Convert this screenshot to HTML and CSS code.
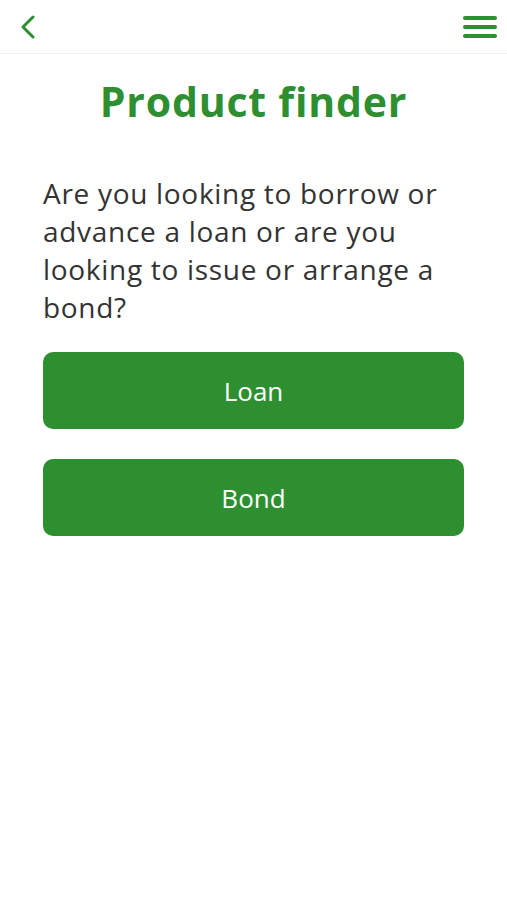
FILE: index.html
```html
<!DOCTYPE html>
<html lang="en">
<head>
  <meta charset="UTF-8">
  <meta name="viewport" content="width=device-width, initial-scale=1.0">
  <title>Product finder</title>
  <link rel="stylesheet" href="styles.css">
</head>
<body>
  <header class="top-bar">
    <button class="icon-btn back-btn" aria-label="Back">
      <svg width="16" height="24" viewBox="0 0 16 24">
        <path d="M13 2 L3 12 L13 22" fill="none" stroke="#2e8f31" stroke-width="3" stroke-linecap="round" stroke-linejoin="round"/>
      </svg>
    </button>
    <button class="icon-btn menu-btn" aria-label="Menu">
      <span></span><span></span><span></span>
    </button>
  </header>
  <main class="finder">
    <h1>Product finder</h1>
    <p class="question">Are you looking to borrow or advance a loan or are you looking to issue or arrange a bond?</p>
    <div class="choices">
      <button class="choice">Loan</button>
      <button class="choice">Bond</button>
    </div>
  </main>
</body>
</html>
```
FILE: styles.css
```css
* {
  margin: 0;
  padding: 0;
  box-sizing: border-box;
}

body {
  font-family: 'Open Sans', sans-serif;
  background: #FFF;
  color: #333;
}

.top-bar {
  height: 54px;
  display: flex;
  align-items: center;
  justify-content: space-between;
  padding: 0 10px 0 20px;
  border-bottom: 1px solid #f0f0f0;
}

.icon-btn {
  background: none;
  border: none;
  cursor: pointer;
  display: flex;
}

.menu-btn {
  flex-direction: column;
  gap: 5px;
  width: 34px;
}

.menu-btn span {
  display: block;
  height: 4px;
  border-radius: 2px;
  background: #2e8f31;
}

.finder {
  padding: 0 43px;
}

.finder h1 {
  font-size: 41px;
  font-weight: 700;
  color: #2e8f31;
  text-align: center;
  margin-top: 22px;
  line-height: 50px;
  letter-spacing: 0.8px;
}

.question {
  font-size: 28px;
  line-height: 38px;
  letter-spacing: 0.7px;
  color: #333;
  margin-top: 48px;
}

.choices {
  display: flex;
  flex-direction: column;
  gap: 30px;
  margin-top: 26px;
}

.choice {
  height: 77px;
  border: none;
  border-radius: 10px;
  background: #2e8f31;
  color: #FFF;
  font-family: inherit;
  font-size: 26px;
  cursor: pointer;
}
```
